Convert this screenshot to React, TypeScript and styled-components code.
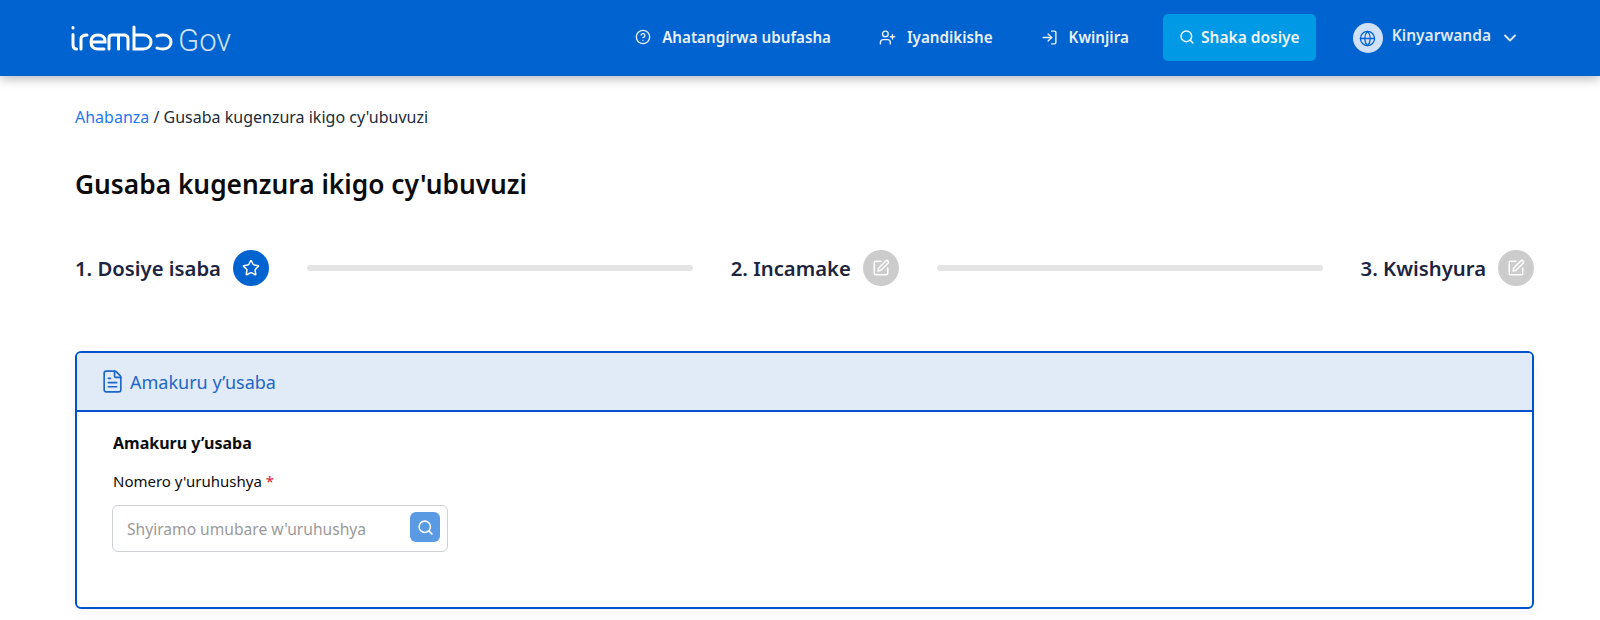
import { createGlobalStyle } from 'styled-components';
import styled from 'styled-components';
import {
  ChevronDown,
  CircleHelp,
  FileText,
  Globe,
  LogIn,
  Search,
  SquarePen,
  Star,
  UserPlus,
} from 'lucide-react';

const GlobalStyle = createGlobalStyle`
  html, body {
    margin: 0;
    padding: 0;
    background: #fff;
    height: 620px;
    overflow: hidden;
    font-family: 'Noto Sans', 'Lato', sans-serif;
  }
  * { box-sizing: border-box; }
`;

const steps = [
  { label: '1. Dosiye isaba', active: true },
  { label: '2. Incamake', active: false },
  { label: '3. Kwishyura', active: false },
];

const Logo = () => (
  <LogoMark viewBox="0 0 106 26" width="106" height="26" aria-label="irembo">
    <g fill="none" stroke="#fff" strokeWidth="3" strokeLinecap="round">
      <path d="M6 2.500v.6" />
      <path d="M6 9.500v10c0 3 1 4.500 3.500 4.500" />
      <path d="M14 24V14c0-3 2-4 6-4" />
      <path d="M24 17h14v-1c0-4-3-6-7-6s-7 2-7 7 3 7 7 7h6" />
      <path d="M42 24V13c0-2 1-3 3-3h12c2.500 0 4 1.500 4 4v10M51.500 10v14" />
      <path d="M67 2v22h9c5 0 8-3 8-7s-3-7-8-7h-9" />
      <path d="M90 11c2-1 3-1 6-1 5 0 8 3 8 7s-3 7-8 7c-3 0-4 0-6-1" />
    </g>
  </LogoMark>
);

export default function App() {
  return (
    <>
      <GlobalStyle />
      <Header>
        <Brand>
          <Logo />
          <GovText>Gov</GovText>
        </Brand>
        <Nav>
          <NavLink>
            <CircleHelp size={16} strokeWidth={2} />
            Ahatangirwa ubufasha
          </NavLink>
          <NavLink>
            <UserPlus size={17} strokeWidth={2} />
            Iyandikishe
          </NavLink>
          <NavLink>
            <LogIn size={17} strokeWidth={2} />
            Kwinjira
          </NavLink>
          <TrackButton>
            <Search size={16} strokeWidth={2.2} />
            Shaka dosiye
          </TrackButton>
          <LangPicker>
            <GlobeBadge>
              <Globe size={17} strokeWidth={1.8} />
            </GlobeBadge>
            <LangName>Kinyarwanda</LangName>
            <ChevronDown size={20} strokeWidth={2.2} />
          </LangPicker>
        </Nav>
      </Header>

      <Main>
        <Breadcrumb>
          <CrumbLink>Ahabanza</CrumbLink> / Gusaba kugenzura ikigo cy'ubuvuzi
        </Breadcrumb>
        <Title>Gusaba kugenzura ikigo cy'ubuvuzi</Title>

        <Stepper>
          {steps.map((step, i) => (
            <StepGroup key={step.label} $last={i === steps.length - 1}>
              <Step>
                <StepLabel>{step.label}</StepLabel>
                <StepCircle $active={step.active}>
                  {step.active ? (
                    <Star size={18} strokeWidth={2} />
                  ) : (
                    <SquarePen size={18} strokeWidth={2} />
                  )}
                </StepCircle>
              </Step>
              {i < steps.length - 1 && <StepBar />}
            </StepGroup>
          ))}
        </Stepper>

        <Card>
          <CardHeader>
            <FileText size={25} strokeWidth={1.6} />
            Amakuru y’usaba
          </CardHeader>
          <CardBody>
            <SectionTitle>Amakuru y’usaba</SectionTitle>
            <FieldLabel>
              Nomero y'uruhushya <Required>*</Required>
            </FieldLabel>
            <InputBox>
              <TextInput placeholder="Shyiramo umubare w'uruhushya" />
              <InputSearch>
                <Search size={17} strokeWidth={2.2} />
              </InputSearch>
            </InputBox>
          </CardBody>
        </Card>
      </Main>
    </>
  );
}

const Header = styled.header`
  height: 76px;
  background: #0063cf;
  box-shadow: 0 3px 10px rgba(0, 0, 0, 0.28);
  display: flex;
  align-items: center;
  justify-content: space-between;
  padding: 0 80px 0 67px;
`;

const Brand = styled.div`
  display: flex;
  align-items: flex-end;
  gap: 5px;
  padding-top: 5px;
`;

const LogoMark = styled.svg`
  display: block;
  margin-bottom: 5px;
`;

const GovText = styled.span`
  color: #d0e1f6;
  font-family: 'Roboto', sans-serif;
  font-weight: 300;
  font-size: 31px;
  line-height: 30px;
`;

const Nav = styled.nav`
  display: flex;
  align-items: center;
  color: #eaf2fb;
`;

const NavLink = styled.a`
  display: flex;
  align-items: center;
  gap: 11px;
  font-size: 15.2px;
  font-weight: 600;
  margin: 0 48px 2px 0;
  color: #e8f0fa;

  &:nth-child(3) {
    margin-right: 50px;
  }
`;

const TrackButton = styled.button`
  width: 153px;
  height: 47px;
  margin: 0 0 2px -16px;
  border: none;
  border-radius: 5px;
  background: #0099e5;
  color: #f0f6fc;
  font: 600 15.5px 'Noto Sans', sans-serif;
  display: flex;
  align-items: center;
  justify-content: center;
  gap: 6px;
`;

const LangPicker = styled.div`
  display: flex;
  align-items: center;
  margin-left: 37px;
  color: #dfe9f7;
`;

const GlobeBadge = styled.span`
  width: 30px;
  height: 30px;
  border-radius: 50%;
  background: #cfe0f7;
  color: #0063cf;
  display: flex;
  align-items: center;
  justify-content: center;
  margin-right: 9px;
`;

const LangName = styled.span`
  font-size: 15.5px;
  font-weight: 600;
  margin: 0 9px 6px 0;
`;

const Main = styled.main`
  padding: 0 66px 0 75px;
`;

const Breadcrumb = styled.div`
  padding-top: 31px;
  font-size: 16px;
  line-height: 20px;
  color: #212b3a;
`;

const CrumbLink = styled.a`
  color: #1f78ee;
`;

const Title = styled.h1`
  margin: 39px 0 0;
  font-size: 26.3px;
  line-height: 36px;
  font-weight: 600;
  color: #0b0b0b;
`;

const Stepper = styled.div`
  display: flex;
  align-items: center;
  margin-top: 48px;
`;

const StepGroup = styled.div<{ $last: boolean }>`
  display: flex;
  align-items: center;
  flex: ${(p) => (p.$last ? '0 0 auto' : '1 1 auto')};
`;

const Step = styled.div`
  display: flex;
  align-items: center;
  gap: 12px;
`;

const StepLabel = styled.span`
  font-size: 20.3px;
  font-weight: 600;
  color: #1c2440;
`;

const StepCircle = styled.span<{ $active: boolean }>`
  width: 36px;
  height: 36px;
  border-radius: 50%;
  display: flex;
  align-items: center;
  justify-content: center;
  color: #fff;
  background: ${(p) => (p.$active ? '#0063cf' : '#cccccc')};
`;

const StepBar = styled.div`
  flex: 1;
  height: 6px;
  border-radius: 3px;
  background: #e4e4e4;
  margin: 0 38px;
`;

const Card = styled.section`
  margin-top: 65px;
  height: 258px;
  border: 2px solid #0052cc;
  border-radius: 6px;
  box-shadow: 0 6px 16px rgba(0, 0, 0, 0.04);
  overflow: hidden;
`;

const CardHeader = styled.div`
  height: 59px;
  background: #e0ebf7;
  border-bottom: 2px solid #0052cc;
  display: flex;
  align-items: center;
  gap: 5px;
  padding-left: 23px;
  font-size: 18px;
  color: #1f66c9;
`;

const CardBody = styled.div`
  padding: 21px 36px;
`;

const SectionTitle = styled.div`
  font-size: 16px;
  line-height: 20px;
  font-weight: 700;
  color: #0d0d0d;
`;

const FieldLabel = styled.label`
  display: block;
  margin-top: 18px;
  font-size: 15px;
  line-height: 20px;
  color: #0d0d0d;
`;

const Required = styled.span`
  color: #e8112d;
`;

const InputBox = styled.div`
  margin: 14px 0 0 -1px;
  width: 336px;
  height: 47px;
  border: 1px solid #cfd2d6;
  border-radius: 6px;
  display: flex;
  align-items: center;
  padding: 0 7px 0 14px;
`;

const TextInput = styled.input`
  flex: 1;
  min-width: 0;
  border: none;
  outline: none;
  font: 15.6px 'Noto Sans', sans-serif;
  color: #333;
  padding-left: 0;

  &::placeholder {
    color: #9a9a9a;
    opacity: 1;
  }
`;

const InputSearch = styled.span`
  width: 30px;
  height: 30px;
  margin-bottom: 3px;
  border-radius: 6px;
  background: #5a9ae2;
  color: #fff;
  display: flex;
  align-items: center;
  justify-content: center;
`;
